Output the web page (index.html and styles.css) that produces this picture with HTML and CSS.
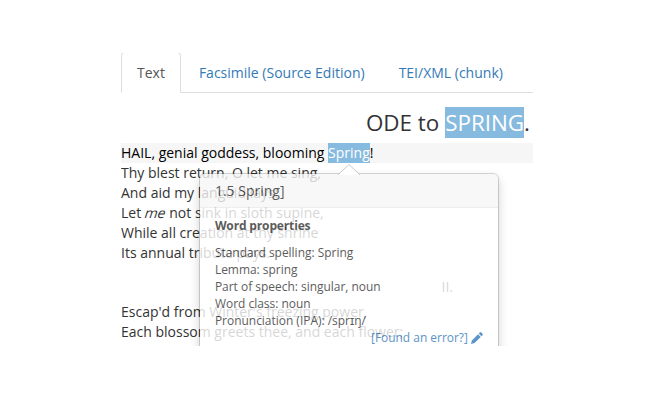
FILE: index.html
```html
<!DOCTYPE html>
<html lang="en">
<head>
<meta charset="utf-8">
<title>Ode to Spring</title>
<link rel="stylesheet" href="styles.css">
</head>
<body>
<main class="reader">
  <nav class="tabs">
    <a class="tab active">Text</a>
    <a class="tab">Facsimile (Source Edition)</a>
    <a class="tab">TEI/XML (chunk)</a>
  </nav>
  <h1 class="title">ODE to <mark>SPRING</mark>.</h1>
  <section class="stanza">
    <div class="line current">HAIL, genial goddess, blooming <span class="anchor"><mark>Spring</mark><aside class="popover">
      <svg class="arrow" viewBox="0 0 22 11"><path d="M0 11 11 0 22 11Z" fill="#fff"/><path d="M0 10.8 11 .5 22 10.8" fill="none" stroke="#bbb"/></svg>
      <h2 class="popover-title">1.5 Spring]</h2>
      <div class="popover-body">
        <h3>Word properties</h3>
        <div>Standard spelling: Spring</div>
        <div>Lemma: spring</div>
        <div>Part of speech: singular, noun</div>
        <div>Word class: noun</div>
        <div>Pronunciation (IPA): /sprɪŋ/</div>
        <a class="report">[Found an error?] <svg class="pencil" viewBox="0 0 12 12"><path d="M0 12 .9 8.5 7.1 2.3 9.7 4.9 3.5 11.1ZM7.8 1.6 9.1.3Q9.5-.1 10 .3L11.7 2Q12.1 2.5 11.7 2.9L10.4 4.2Z" fill="currentColor"/></svg></a>
      </div>
    </aside></span>!</div>
    <div class="line">Thy blest return, O let me sing,</div>
    <div class="line">And aid my languid lays:</div>
    <div class="line">Let <em>me</em> not sink in sloth supine,</div>
    <div class="line">While all creation at thy shrine</div>
    <div class="line">Its annual tribute pays.</div>
  </section>
  <div class="number">II.</div>
  <section class="stanza">
    <div class="line">Escap'd from Winter's freezing power,</div>
    <div class="line">Each blossom greets thee, and each flower;</div>
  </section>
</main>
</body>
</html>
```
FILE: styles.css
```css
* { box-sizing: border-box; }
body {
  margin: 0;
  padding: 53px 117px 54px 121px;
  background: #fff;
  color: #333;
  font: 14px/20px "Open Sans", sans-serif;
}
.reader { height: 293px; overflow: hidden; }
.tabs {
  display: flex;
  gap: 2px;
  height: 41px;
  margin-top: -1px;
  border-bottom: 1px solid #ddd;
}
.tab {
  height: 41px;
  padding: 10px 15px;
  border: 1px solid transparent;
  border-radius: 4px 4px 0 0;
  color: #337ab7;
  white-space: nowrap;
}
.tab.active { color: #555; background: #fff; border-color: #ddd #ddd #fff; }
.title {
  margin: 14px 3px 5px 0;
  font-size: 22.4px;
  font-weight: 400;
  line-height: 31px;
  text-align: right;
}
mark { background: #87badf; color: #fff; }
.line { height: 20px; white-space: pre; }
.line em { display: inline-block; height: 20px; vertical-align: top; font-style: normal; transform: skewX(-18deg); }
.current { background: #f6f6f6; color: #000; }
.anchor { position: relative; display: inline-block; white-space: normal; }
.anchor mark { display: block; height: 20px; }
.popover {
  position: absolute;
  top: 30px;
  left: 50%;
  width: 300px;
  height: 190px;
  margin-left: -150px;
  border: 1px solid rgba(0, 0, 0, .2);
  border-radius: 6px;
  background: #fff;
  background-clip: padding-box;
  box-shadow: 0 5px 10px rgba(0, 0, 0, .2);
  color: #333;
  opacity: .8;
}
.arrow { position: absolute; top: -10px; left: 138px; width: 22px; height: 11px; }
.popover-title {
  margin: 0;
  height: 34px;
  padding: 8px 15px;
  border-bottom: 1px solid #ebebeb;
  border-radius: 5px 5px 0 0;
  background: #f7f7f7;
  font-size: 14px;
  font-weight: 400;
  line-height: 18px;
}
.popover-body {
  display: flex;
  flex-direction: column;
  padding: 9px 15px;
  font-size: 11.95px;
  line-height: 17px;
}
.popover-body h3 { margin: 0 0 10px; font-size: 12px; line-height: 17px; letter-spacing: -.15px; }
.report {
  display: flex;
  align-items: center;
  align-self: flex-end;
  gap: 3px;
  color: #337ab7;
}
.pencil { width: 12px; height: 12px; }
.number { margin: 14px 80px 5px 0; text-align: right; }
```
